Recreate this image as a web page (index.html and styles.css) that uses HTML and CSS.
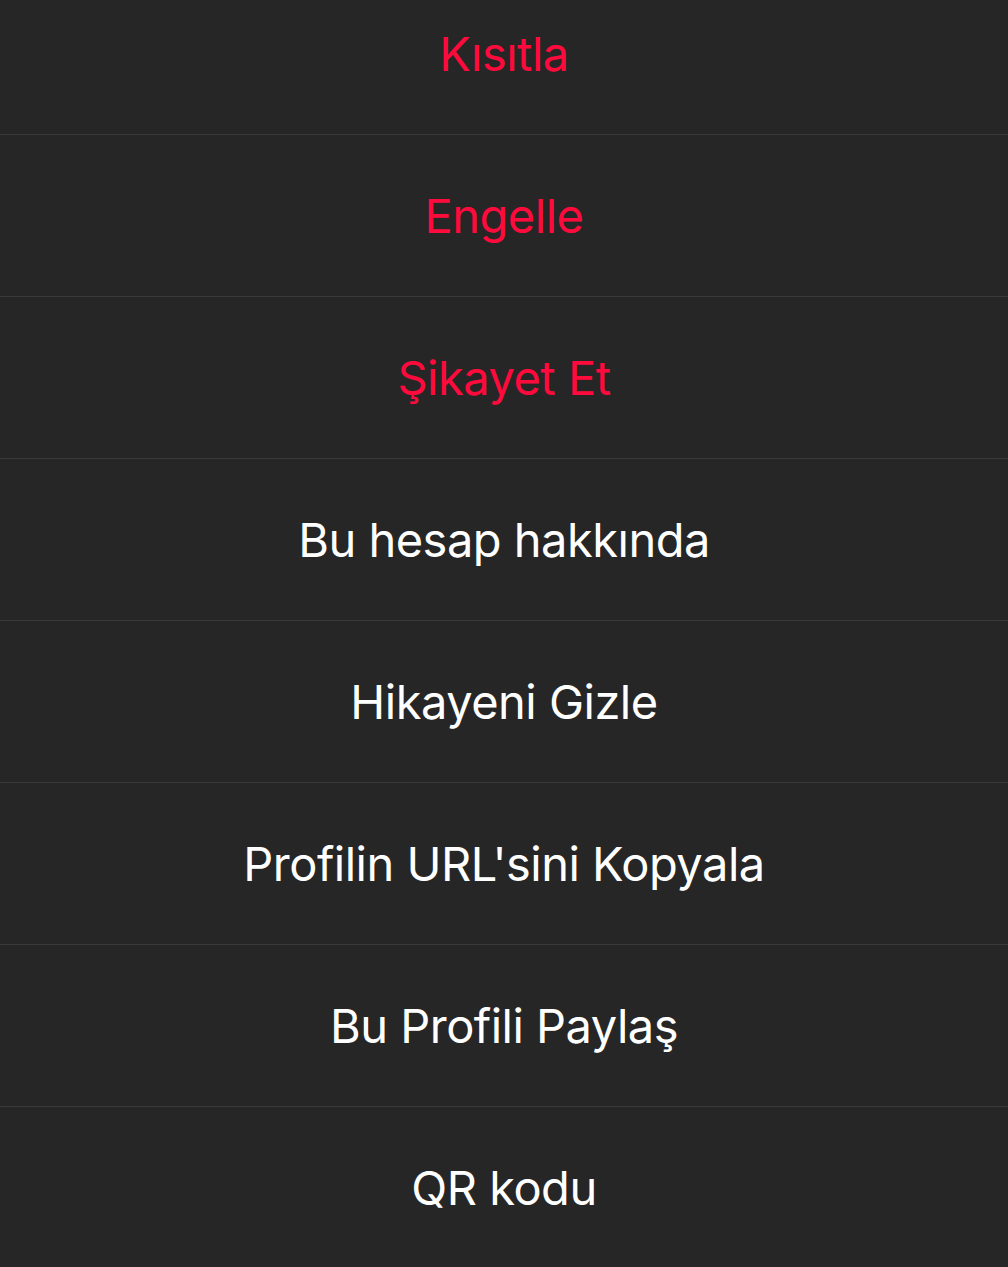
FILE: index.html
```html
<!DOCTYPE html>
<html lang="tr">

<head>
    <meta charset="UTF-8">
    <meta name="viewport" content="width=device-width, initial-scale=1.0">
    <title>Profil seçenekleri</title>
    <link rel="stylesheet" href="styles.css">
</head>

<body>
    <ul class="menu">
        <li class="menu-item danger">Kısıtla</li>
        <li class="menu-item danger">Engelle</li>
        <li class="menu-item danger">Şikayet Et</li>
        <li class="menu-item">Bu hesap hakkında</li>
        <li class="menu-item">Hikayeni Gizle</li>
        <li class="menu-item">Profilin URL'sini Kopyala</li>
        <li class="menu-item">Bu Profili Paylaş</li>
        <li class="menu-item">QR kodu</li>
    </ul>
</body>

</html>
```

FILE: styles.css
```css
body {
    margin: 0;
    padding: 0;
    background-color: #262626;
    font-family: Inter, Roboto, "Noto Sans", sans-serif;
    overflow: hidden;
}

.menu {
    list-style: none;
    margin: -27px 0 0 0;
    padding: 0;
}

.menu-item {
    height: 161px;
    display: flex;
    align-items: center;
    justify-content: center;
    border-bottom: 1px solid #3a3a3a;
    color: #ffffff;
    font-size: 47px;
    letter-spacing: -0.5px;
    font-weight: 400;
    cursor: pointer;
}

.menu-item:last-child {
    border-bottom: none;
}

.danger {
    color: #ff0a3c;
}
```
